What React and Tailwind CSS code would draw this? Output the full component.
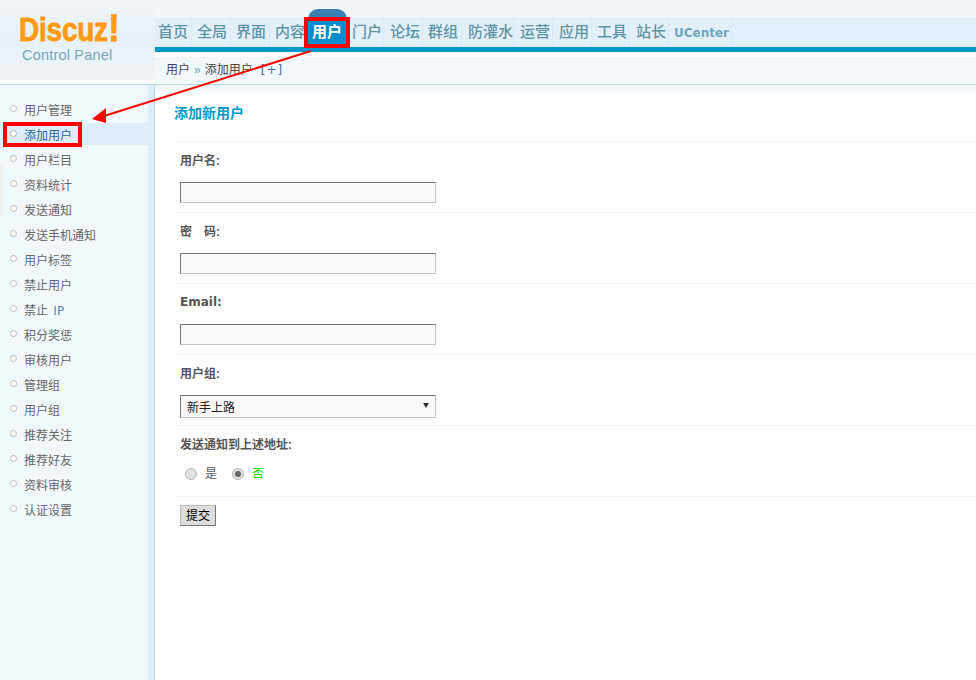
const navA = [
  ["首页", 38, 4], ["全局", 39, 5], ["界面", 39, 5], ["内容", 34, 5],
];
const navB = [
  ["门户", 36, 4], ["论坛", 39, 6], ["群组", 39, 5], ["防灌水", 52, 6], ["运营", 39, 6], ["应用", 39, 6], ["工具", 38, 5], ["站长", 39, 6],
];
const side = ["用户管理","添加用户","用户栏目","资料统计","发送通知","发送手机通知","用户标签","禁止用户","禁止 IP","积分奖惩","审核用户","管理组","用户组","推荐关注","推荐好友","资料审核","认证设置"];
const font = { fontFamily: '"Liberation Sans", "Noto Sans CJK SC", sans-serif' };
const dejavu = { fontFamily: '"DejaVu Sans", sans-serif' };

function NavItem({ label, w, p }) {
  return (
    <li
      className="flex h-[29px] items-center border-r border-[#dbe9f4] text-[15px] font-medium text-[#5e94a8]"
      style={{ width: w, paddingLeft: p }}
    >
      <span className="whitespace-nowrap">{label}</span>
    </li>
  );
}

function Row({ label, children }) {
  return (
    <div className="h-[71px] border-t border-dotted border-[#d9eefa] pl-[5px]">
      <div className="pt-[10px] text-xs font-bold leading-[18px] text-[#555]">{label}</div>
      {children}
    </div>
  );
}

function Field() {
  return <input className="mt-[12px] block h-[21px] w-[256px] border border-t-[#767676] border-l-[#767676] border-r-[#c4c4c4] border-b-[#c4c4c4] bg-[#f9f9f9]" />;
}

export default function App() {
  return (
    <div className="relative flex h-[680px] w-[976px] overflow-hidden bg-white" style={font}>
      <aside className="flex w-[155px] shrink-0 flex-col">
        <div className="h-[80px] bg-gradient-to-b from-[#f0f6fc] via-[#e6f1fa] to-[#eef5fb] pl-[19px] pt-[11px]">
          <div className="flex h-[36px] origin-left scale-x-[0.85] items-baseline text-[33px] font-bold leading-[36px] tracking-[-0.3px] text-[#ff9a14] [-webkit-text-stroke:0.8px_#ff9a14] [text-shadow:1px_1px_0_white]">
            Discuz<span className="ml-[1px] text-[37px] text-[#ff9a14] [-webkit-text-stroke:1.4px_#ff9a14]">!</span>
          </div>
          <div className="ml-[3px] text-[14.5px] leading-[16px] tracking-[0.2px] text-[#7aa6b8]">Control Panel</div>
        </div>
        <div className="h-[4px] bg-white" />
        <div className="flex flex-1 border-t border-[#b5d5e3] bg-[#f0f9fd]">
          <ul className="w-[148px] pt-[12px]">
            {side.map((s, i) => (
              <li key={s} className={`flex h-[25px] items-center border-t border-b-2 border-transparent bg-clip-padding pl-[24px] pt-[3px] text-xs ${i === 1 ? "bg-[#deedf8] text-[#2366a8]" : "text-[#666]"}`}>
                <span className="-ml-[14px] mb-[5px] mr-[7px] h-[7px] w-[7px] rounded-full border border-[#b8b8b8] bg-white" />
                {s === "禁止 IP" ? <span>禁止 <span className="ml-[2px] text-[#5d87ad]" style={dejavu}>IP</span></span> : s}
              </li>
            ))}
          </ul>
          <div className="w-[6px] bg-[#deedf8]" />
          <div className="w-px bg-[#b5d5e3]" />
        </div>
      </aside>

      <main className="flex min-w-0 flex-1 flex-col">
        <div className="h-[18px] bg-[#f0f6fc]" />
        <ul className="-ml-px flex h-[29px] bg-[#e3f0f9]">
          {navA.map(([l, w, p]) => <NavItem key={l} label={l} w={w} p={p} />)}
          <li className="relative flex h-[29px] w-[44px] items-center pl-[8px] text-[15px] font-bold text-white">
            <span className="absolute left-[4px] right-[1px] -top-[9px] bottom-0 rounded-t-[10px] bg-[#3c7fb5]" />
            <span className="absolute left-[4px] right-[1px] top-0 bottom-0 bg-[#0a8ccc]" />
            <span className="relative">用户</span>
          </li>
          {navB.map(([l, w, p]) => <NavItem key={l} label={l} w={w} p={p} />)}
          <li className="flex h-[29px] w-[64px] items-center border-r border-[#dbe9f4] pl-[5px] text-xs font-bold text-[#6fa6bd]" style={dejavu}>UCenter</li>
        </ul>
        <div className="h-[5px] bg-[#0099cc]" />
        <div className="h-[5px] bg-white" />
        <div className="flex h-[26px] items-center bg-[#f0f8fd] pl-[11px] text-xs text-[#444]">
          用户 <span className="mx-[4px] text-[#6d9fb3]">»</span> 添加用户
          <span className="ml-[8px] tracking-[1px] text-[#4a6fa5]" style={dejavu}>[+]</span>
        </div>
        <div className="h-px bg-white" />
        <div className="h-px bg-[#b5d5e3]" />
        <div className="h-[12px] bg-gradient-to-b from-[#eef6fa] to-white" />
        <section className="pl-[20px]">
          <h2 className="-ml-px h-[44px] pt-[6px] text-sm font-bold leading-[20px] text-[#0099cc]">添加新用户</h2>
          <Row label="用户名:"><Field /></Row>
          <Row label="密　码:"><Field /></Row>
          <Row label={<span className="inline-block -translate-y-px" style={dejavu}>Email:</span>}><Field /></Row>
          <Row label="用户组:">
            <div className="relative mt-[12px] flex h-[23px] w-[256px] items-center border border-t-[#767676] border-l-[#767676] border-r-[#c4c4c4] border-b-[#c4c4c4] bg-[#f9f9f9] pl-[6px] pt-[2px] text-xs text-[#222]">
              新手上路
              <span className="absolute right-[6px] top-[7px] h-0 w-0 border-x-[3px] border-t-[5px] border-x-transparent border-t-[#333]" />
            </div>
          </Row>
          <Row label="发送通知到上述地址:">
            <div className="mt-[10px] flex h-[20px] items-center text-xs text-[#555]">
              <span className="ml-[5px] h-[12px] w-[12px] rounded-full border border-[#b5b5b5] bg-[#e2e2e2]" />
              <span className="ml-[8px]">是</span>
              <span className="ml-[15px] flex h-[12px] w-[12px] items-center justify-center rounded-full border border-[#b5b5b5] bg-[#e2e2e2]">
                <span className="h-[6px] w-[6px] rounded-full bg-[#666]" />
              </span>
              <span className="ml-[8px] text-[#00dd00]">否</span>
            </div>
          </Row>
          <div className="border-t border-dotted border-[#d9eefa] pl-[5px] pt-[8px]">
            <button className="block h-[21px] w-[36px] border border-[#bbb] border-r-[#777] border-b-[#777] bg-[#dddddd] text-xs text-black">提交</button>
          </div>
        </section>
      </main>

      {/* annotation overlays */}
      <div className="pointer-events-none absolute left-0 top-[165px] h-[50px] w-[4px] bg-gradient-to-r from-[#eeeeee] to-transparent" />
      <div className="pointer-events-none absolute left-[304px] top-[17px] h-[31px] w-[46px] border-[4px] border-[#ff0000]" />
      <div className="pointer-events-none absolute left-[3px] top-[122px] h-[25px] w-[79px] border-[4px] border-[#ff0000]" />
      <svg className="pointer-events-none absolute left-0 top-0" width="976" height="680" viewBox="0 0 976 680">
        <line x1="311" y1="51" x2="104" y2="116" stroke="#ff0000" strokeWidth="2" />
        <polygon points="92,119 106,108 106,123" fill="#ff0000" />
      </svg>
    </div>
  );
}
